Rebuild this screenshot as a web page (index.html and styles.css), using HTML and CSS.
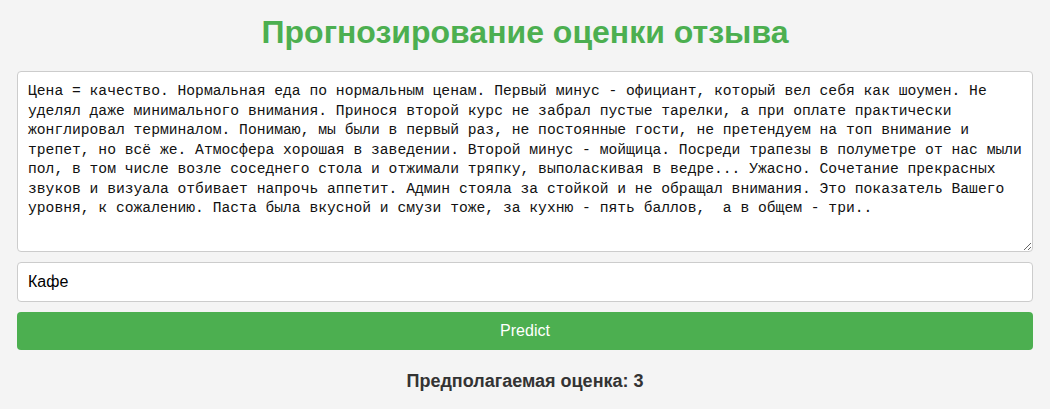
FILE: index.html
```html
<!DOCTYPE html>
<html lang="ru">
<head>
<meta charset="utf-8">
<title>Прогнозирование оценки отзыва</title>
<link rel="stylesheet" href="styles.css">
</head>
<body>
<main class="page">
  <h1 class="title">Прогнозирование оценки отзыва</h1>
  <form class="form">
    <textarea class="review" spellcheck="false">Цена = качество. Нормальная еда по нормальным ценам. Первый минус - официант, который вел себя как шоумен. Не уделял даже минимального внимания. Принося второй курс не забрал пустые тарелки, а при оплате практически жонглировал терминалом. Понимаю, мы были в первый раз, не постоянные гости, не претендуем на топ внимание и трепет, но всё же. Атмосфера хорошая в заведении. Второй минус - мойщица. Посреди трапезы в полуметре от нас мыли пол, в том числе возле соседнего стола и отжимали тряпку, выполаскивая в ведре... Ужасно. Сочетание прекрасных звуков и визуала отбивает напрочь аппетит. Админ стояла за стойкой и не обращал внимания. Это показатель Вашего уровня, к сожалению. Паста была вкусной и смузи тоже, за кухню - пять баллов,  а в общем - три..</textarea>
    <input class="category" type="text" value="Кафе" spellcheck="false">
    <button class="predict" type="button">Predict</button>
  </form>
  <p class="result">Предполагаемая оценка: 3</p>
</main>
</body>
</html>
```

FILE: styles.css
```css
html, body {
  margin: 0;
  padding: 0;
  background: #f4f4f4;
}

.page {
  padding: 14px 17px 0;
  font-family: "Liberation Sans", Arial, sans-serif;
}

.title {
  margin: 0 0 20px;
  text-align: center;
  color: #4caf50;
  font-size: 32px;
  line-height: 37px;
  font-weight: bold;
}

.form {
  display: flex;
  flex-direction: column;
  gap: 10px;
}

.review {
  box-sizing: border-box;
  width: 100%;
  height: 181px;
  margin: 0;
  padding: 10px 4px 10px 10px;
  border: 1px solid #ccc;
  border-radius: 4px;
  background: #fff;
  color: #111;
  font-family: "Liberation Mono", "Courier New", monospace;
  font-size: 14.667px;
  line-height: 19.5px;
  resize: vertical;
}

.category {
  box-sizing: border-box;
  width: 100%;
  height: 40px;
  margin: 0;
  padding: 0 10px;
  border: 1px solid #ccc;
  border-radius: 4px;
  background: #fff;
  color: #000;
  font-family: "Liberation Sans", Arial, sans-serif;
  font-size: 16px;
}

.predict {
  height: 38px;
  margin: 0;
  border: none;
  border-radius: 4px;
  background: #4caf50;
  color: #fff;
  font-family: "Liberation Sans", Arial, sans-serif;
  font-size: 16px;
}

.result {
  margin: 20px 0 0;
  text-align: center;
  color: #333;
  font-size: 18px;
  line-height: 22px;
  font-weight: bold;
}
```
